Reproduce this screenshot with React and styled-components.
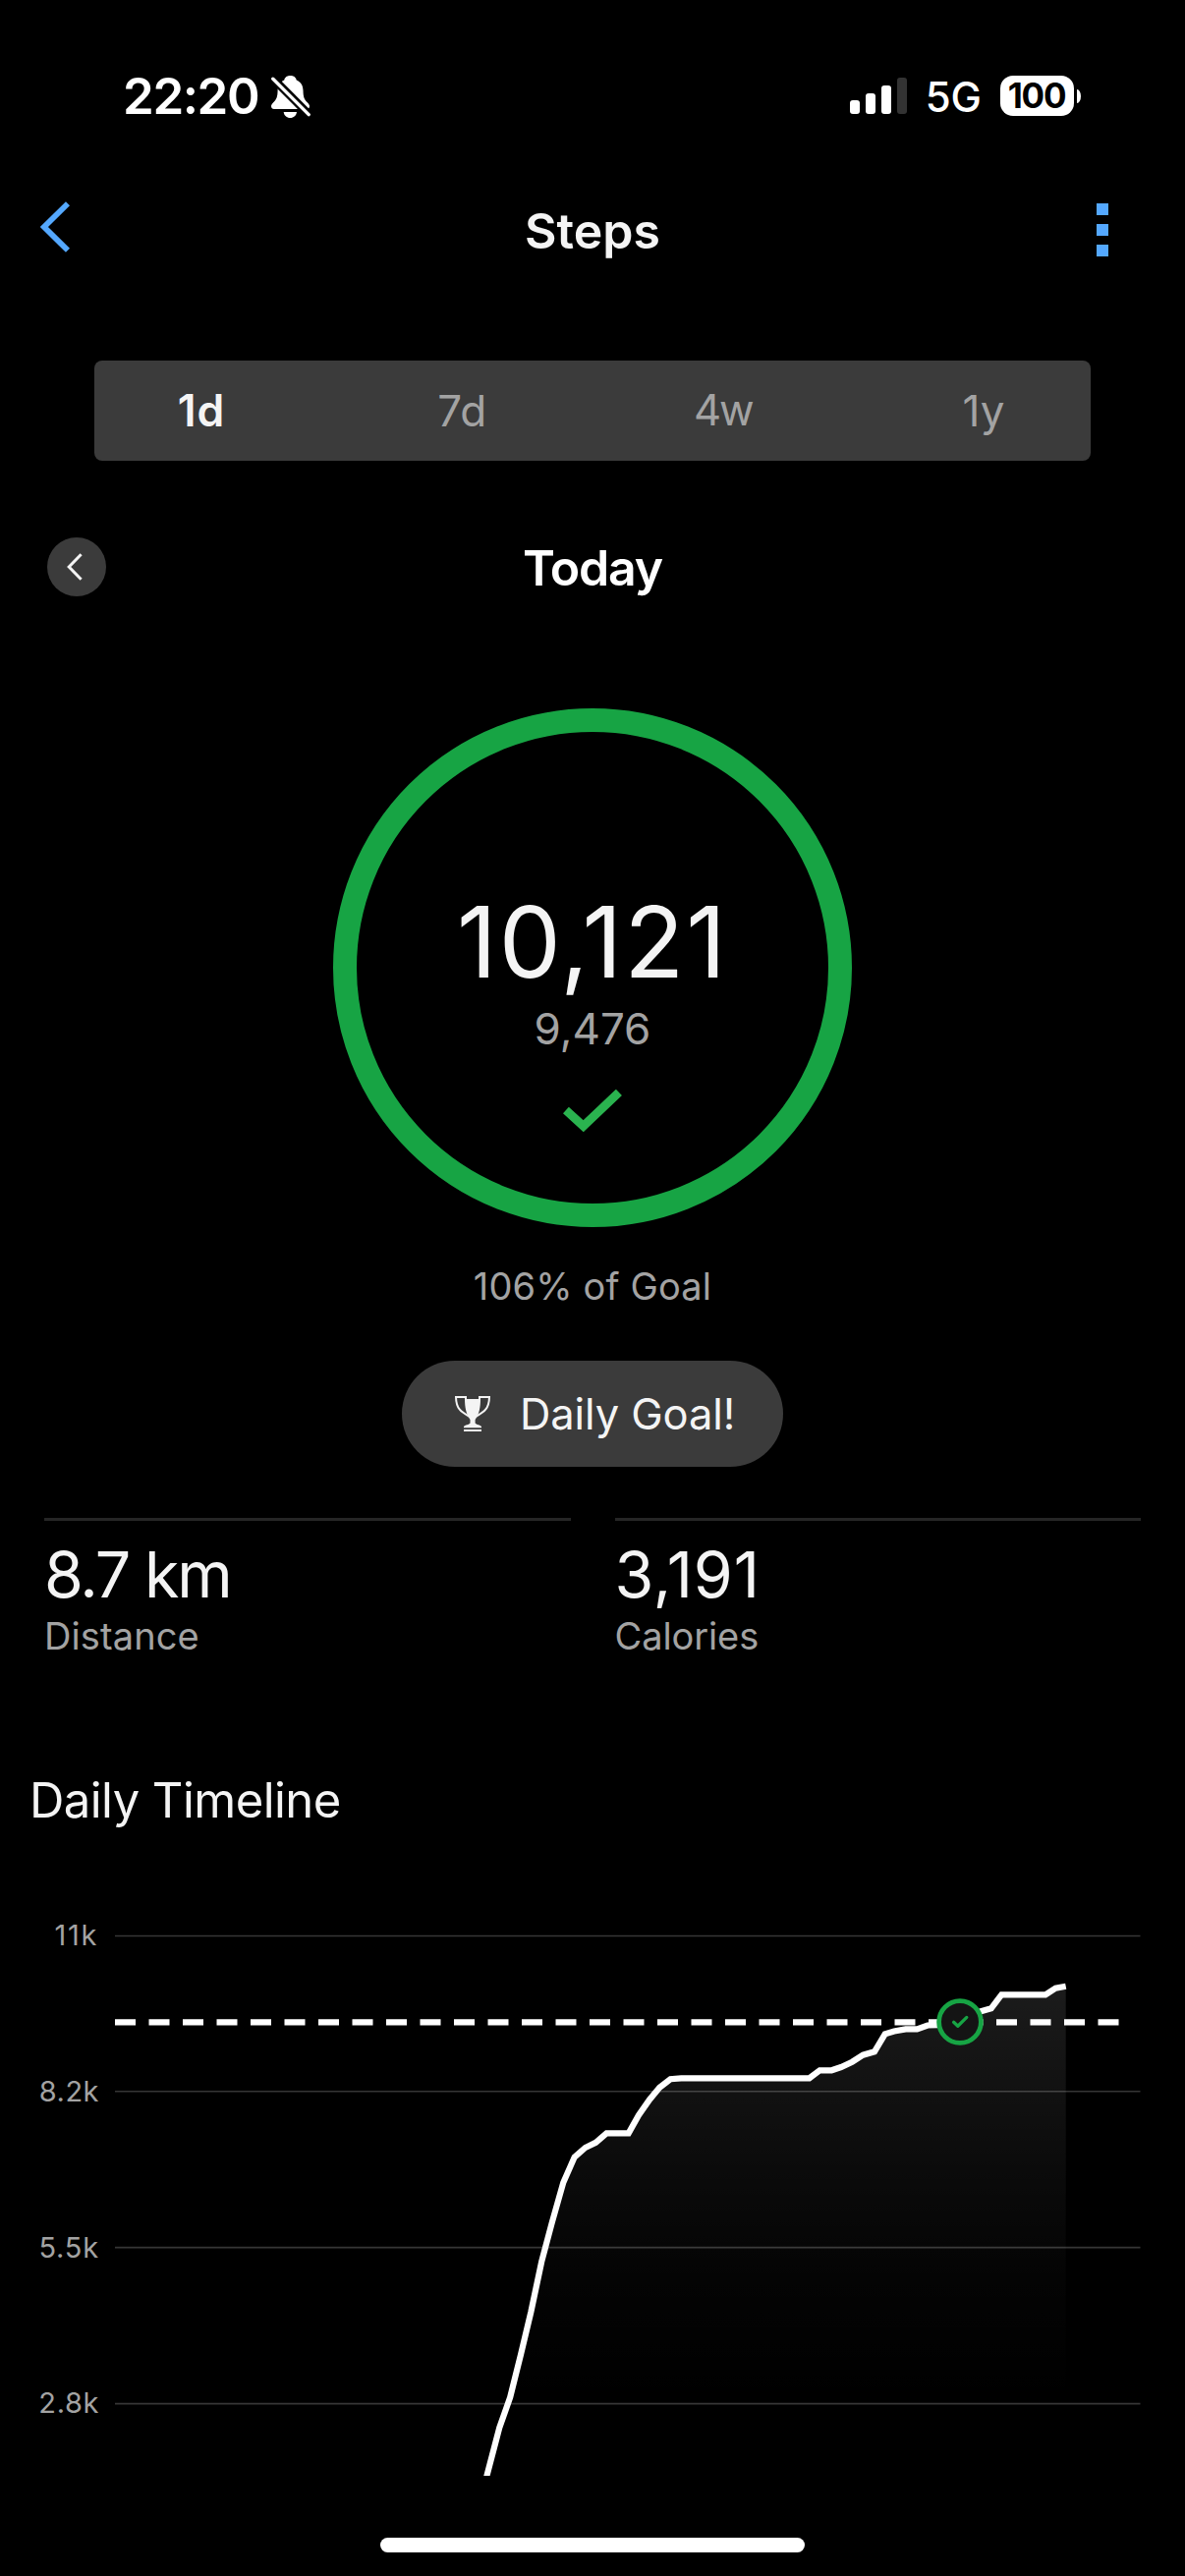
import React from "react";
import styled, { createGlobalStyle } from "styled-components";

const GlobalStyle = createGlobalStyle`
  * { box-sizing: border-box; }
  body {
    margin: 0;
    background: #000;
    color: #f4f4f4;
    font-family: Inter, "Liberation Sans", sans-serif;
  }
  svg { display: block; flex: none; }
`;

const Screen = styled.main`
  width: 1206px;
  height: 2622px;
  overflow: hidden;
  display: flex;
  flex-direction: column;
  background: #000;
`;

const Text = styled.span`
  font-size: ${(p) => p.$size}px;
  font-weight: ${(p) => p.$weight || 400};
  letter-spacing: ${(p) => p.$spacing || 0}px;
  line-height: ${(p) => p.$line || p.$size}px;
  color: ${(p) => p.$color || "#f4f4f4"};
  white-space: nowrap;
`;

/* Status bar */
const StatusBar = styled.header`
  height: 195px;
  padding: 0 106px 0 125px;
  display: flex;
  justify-content: space-between;
  align-items: center;
`;

const StatusGroup = styled.div`
  display: flex;
  align-items: center;
`;

const BellWrap = styled.div`
  margin: 2px 0 0 13px;
`;

const Signal = styled.div`
  display: flex;
  align-items: flex-end;
  gap: 6px;
  margin-right: 19px;
`;

const SignalBar = styled.i`
  width: 10px;
  height: ${(p) => p.$height}px;
  border-radius: 3px;
  background: ${(p) => (p.$off ? "#333" : "#fff")};
`;

const Network = styled(Text)`
  margin: 3px 19px 0 0;
`;

const Battery = styled.div`
  width: 75px;
  height: 41px;
  padding-right: 1px;
  border-radius: 13px;
  background: #fff;
  display: flex;
  justify-content: center;
  align-items: center;
`;

const BatteryCap = styled.i`
  width: 4px;
  height: 14px;
  margin-left: 3px;
  border-radius: 0 4px 4px 0 / 0 7px 7px 0;
  background: #fff;
`;

/* Navigation */
const NavBar = styled.nav`
  height: 78px;
  padding: 0 78px 0 41px;
  display: grid;
  grid-template-columns: 49px 1fr 12px;
  align-items: center;
`;

const BackButton = styled.div`
  margin-bottom: 6px;
`;

const NavTitle = styled.h1`
  margin: 2px 0 0;
  display: flex;
  justify-content: center;
`;

const Dots = styled.div`
  display: flex;
  flex-direction: column;
  gap: 9px;
`;

const Dot = styled.i`
  width: 12px;
  height: 12px;
  background: #54a8ff;
`;

/* Range switch */
const Segments = styled.div`
  height: 102px;
  margin: 94px 96px 0;
  padding: 0 24px;
  display: flex;
  justify-content: space-between;
  align-items: center;
  border-radius: 8px;
  background: #3b3b3b;
`;

const Segment = styled.div`
  width: 170px;
  display: flex;
  justify-content: center;
`;

/* Date row */
const DateRow = styled.div`
  height: 60px;
  margin-top: 78px;
  padding: 0 48px;
  display: grid;
  grid-template-columns: 60px 1fr 60px;
  align-items: center;
  justify-items: center;
`;

const DateTitle = styled(Text)`
  padding-top: 2px;
`;

const PrevButton = styled.div`
  width: 60px;
  height: 60px;
  padding-right: 4px;
  border-radius: 50%;
  background: #3b3b3b;
  display: flex;
  justify-content: center;
  align-items: center;
`;

/* Goal ring */
const Summary = styled.section`
  margin-top: 114px;
  display: flex;
  flex-direction: column;
  align-items: center;
`;

const Ring = styled.div`
  width: 528px;
  height: 528px;
  padding-top: 154px;
  border: 24px solid #17a444;
  border-radius: 50%;
  display: flex;
  flex-direction: column;
  align-items: center;
`;

const RingCheck = styled.div`
  margin-top: 33px;
`;

const GoalText = styled(Text)`
  margin-top: 30px;
`;

const Badge = styled.div`
  width: 388px;
  height: 108px;
  margin-top: 46px;
  padding-left: 54px;
  display: flex;
  align-items: center;
  gap: 30px;
  border-radius: 54px;
  background: #3b3b3b;
`;

const BadgeText = styled(Text)`
  padding-top: 1px;
`;

/* Stats */
const Stats = styled.section`
  margin-top: 52px;
  padding: 0 45px;
  display: grid;
  grid-template-columns: 1fr 1fr;
  gap: 45px;
`;

const Stat = styled.div`
  padding-top: 22px;
  border-top: 3px solid #262626;
  display: flex;
  flex-direction: column;
  gap: 4px;
`;

/* Timeline */
const SectionTitle = styled.h2`
  margin: 111px 0 0 30px;
  display: flex;
`;

const Timeline = styled.section`
  height: 629px;
  margin-top: 26px;
  display: flex;
  gap: 16px;
  overflow: hidden;
`;

const AxisLabels = styled.div`
  width: 101px;
  flex: none;
  display: flex;
  flex-direction: column;
  align-items: flex-end;
`;

const AxisLabel = styled(Text)`
  padding-right: ${(p) => p.$inset || 0}px;
`;

const HomeIndicator = styled.div`
  width: 432px;
  height: 15px;
  margin: 63px auto 0;
  border-radius: 8px;
  background: #fff;
`;

const grey = "#a3a3a3";

const ranges = [
  { label: "1d", active: true, size: 44.5, spacing: 1 },
  { label: "7d", size: 44, spacing: 0.3 },
  { label: "4w", size: 43.5, spacing: -2.2 },
  { label: "1y", size: 44, spacing: 0 },
];

const stats = [
  { value: "8.7 km", label: "Distance", spacing: -2.17, labelSpacing: 0.1 },
  { value: "3,191", label: "Calories", spacing: 0.9, labelSpacing: -0.1 },
];

const axis = [
  { label: "11k", spacing: 1.7, inset: 1, line: 157 },
  { label: "8.2k", spacing: 0.5, line: 161 },
  { label: "5.5k", spacing: 0.8, line: 157 },
  { label: "2.8k", spacing: 0.6, line: 159 },
];

const steps = [
  [375.5, 641], [378.7, 628], [391.3, 580], [402.2, 549], [413, 505.8], [423.3, 462.5], [434.2, 411],
  [444.7, 371.5], [456.3, 330.5], [467.7, 304.6], [478.7, 295], [489.3, 289.8], [500.3, 280.3],
  [522.7, 280.3], [533, 262], [544, 246.2], [554.3, 233.8], [565.3, 225.2], [576.3, 224.3],
  [706.7, 224.3], [717.3, 216.3], [729.3, 216.3], [739, 213], [750.3, 207.7], [761.3, 200.7],
  [773, 197.3], [783.7, 179.3], [793, 176.5], [804.7, 174.4], [816.3, 174.4], [827, 170.5],
  [838, 170.2], [849, 168], [881.3, 156.2], [891.7, 153.3], [902.3, 139.3], [947, 139.3],
  [957.3, 132.7], [967.7, 130.7],
];
const line = steps.map((p) => p.join(",")).join(" ");
const area = `${line} 967.7,641`;

const BellOff = () => (
  <svg width="40" height="43" viewBox="0 0 40 43">
    <path
      fill="#fff"
      d="M19.5 0C15.4 0 13.6 2.4 13.3 4.4C9 6.2 6.7 9.6 6.6 15C6.4 22 5.6 24 2 27.4C0.6 28.9 0 30 0 31C0 33 1.2 34 3 34H36C38 34 39 33 39 31C39 30 38.4 28.9 37 27.4C33.4 24 32.7 22 32.5 15C32.4 9.6 30 6.2 25.7 4.4C25.4 2.4 23.6 0 19.5 0Z"
    />
    <path d="M-2 -0.9L42 43.1" stroke="#000" strokeWidth="8.4" />
    <path fill="#fff" d="M12.7 37H26C25.6 40.6 22.9 43 19.3 43C15.8 43 13.1 40.6 12.7 37Z" />
    <path d="M1.8 3.2L38.2 39.6" stroke="#fff" strokeWidth="3.4" strokeLinecap="round" />
  </svg>
);

const Trophy = () => (
  <svg width="36" height="36" viewBox="0 0 36 36">
    <path
      d="M12 1H1C1.3 12.5 5.5 16 15.5 21.3M24 1H35C34.7 12.5 30.5 16 20.5 21.3M11 0V4M25 0V4"
      fill="none"
      stroke="#f4f4f4"
      strokeWidth="2"
    />
    <path
      fill="#f4f4f4"
      d="M10 3H26C26 11 24.8 18.5 20.6 24V27.4C21.6 29.2 26 29 27 31V32.3H9V31C10 29 14.6 29.2 15.5 27.4V24C11.3 18.5 10 11 10 3Z"
    />
    <path fill="#f4f4f4" d="M9 34H27V36H9Z" />
  </svg>
);

export default function App() {
  return (
    <Screen>
      <GlobalStyle />
      <StatusBar>
        <StatusGroup>
          <Text $size={51} $weight={600} $spacing={-1.4} $color="#fff">22:20</Text>
          <BellWrap><BellOff /></BellWrap>
        </StatusGroup>
        <StatusGroup>
          <Signal>
            <SignalBar $height={14} />
            <SignalBar $height={21} />
            <SignalBar $height={29} />
            <SignalBar $height={37} $off />
          </Signal>
          <Network $size={42} $weight={500} $color="#fff">5G</Network>
          <Battery>
            <Text $size={35} $weight={700} $spacing={-1.2} $color="#000">100</Text>
          </Battery>
          <BatteryCap />
        </StatusGroup>
      </StatusBar>

      <NavBar>
        <BackButton>
          <svg width="30" height="52" viewBox="0 0 30 52">
            <path d="M28 2.2L3.9 26L28 49.8" fill="none" stroke="#54a8ff" strokeWidth="5.8" />
          </svg>
        </BackButton>
        <NavTitle><Text $size={50} $weight={600}>Steps</Text></NavTitle>
        <Dots><Dot /><Dot /><Dot /></Dots>
      </NavBar>

      <Segments>
        {ranges.map((r) => (
          <Segment key={r.label}>
            <Text
              $size={r.size}
              $weight={r.active ? 600 : 400}
              $spacing={r.spacing}
              $color={r.active ? "#f4f4f4" : grey}
            >
              {r.label}
            </Text>
          </Segment>
        ))}
      </Segments>

      <DateRow>
        <PrevButton>
          <svg width="16" height="28" viewBox="0 0 16 28">
            <path d="M14.6 1.2L2.2 14L14.6 26.8" fill="none" stroke="#f4f4f4" strokeWidth="3" />
          </svg>
        </PrevButton>
        <DateTitle $size={50} $weight={600} $spacing={-1.2} $line={58} $color="#fff">Today</DateTitle>
      </DateRow>

      <Summary>
        <Ring>
          <Text $size={100} $spacing={2.07} $line={120}>10,121</Text>
          <Text $size={44} $line={57} $color={grey}>9,476</Text>
          <RingCheck>
            <svg width="60" height="44" viewBox="0 0 60 44">
              <path d="M2.9 21L20.7 37.3L56.9 2.9" fill="none" stroke="#2ab34f" strokeWidth="8.8" />
            </svg>
          </RingCheck>
        </Ring>
        <GoalText $size={38} $spacing={0.15} $line={60} $color={grey}>106% of Goal</GoalText>
        <Badge>
          <Trophy />
          <BadgeText $size={43.5} $spacing={-0.1}>Daily Goal!</BadgeText>
        </Badge>
      </Summary>

      <Stats>
        {stats.map((s) => (
          <Stat key={s.label}>
            <Text $size={64.5} $spacing={s.spacing} $line={66}>{s.value}</Text>
            <Text $size={38} $spacing={s.labelSpacing} $line={50} $color={grey}>{s.label}</Text>
          </Stat>
        ))}
      </Stats>

      <SectionTitle>
        <Text $size={49} $spacing={-0.55} $line={64}>Daily Timeline</Text>
      </SectionTitle>

      <Timeline>
        <AxisLabels>
          {axis.map((a) => (
            <AxisLabel key={a.label} $size={29} $spacing={a.spacing} $line={a.line} $inset={a.inset} $color={grey}>
              {a.label}
            </AxisLabel>
          ))}
        </AxisLabels>
        <svg width="1044" height="629" viewBox="0 0 1044 629">
          <defs>
            <linearGradient id="fade" gradientUnits="userSpaceOnUse" x1="0" y1="130" x2="0" y2="629">
              <stop offset="0" stopColor="#fff" stopOpacity="0.11" />
              <stop offset="0.19" stopColor="#fff" stopOpacity="0.073" />
              <stop offset="0.38" stopColor="#fff" stopOpacity="0.043" />
              <stop offset="0.6" stopColor="#fff" stopOpacity="0.016" />
              <stop offset="0.85" stopColor="#fff" stopOpacity="0" />
            </linearGradient>
          </defs>
          {[79.5, 237.7, 396.6, 555.6].map((y) => (
            <path key={y} d={`M0 ${y}H1043.5`} stroke="#fff" strokeOpacity="0.21" strokeWidth="1.6" />
          ))}
          <polygon points={area} fill="url(#fade)" />
          <path d="M0 167.4H1021.5" stroke="#fff" strokeWidth="6.2" strokeDasharray="21 13.5" />
          <polyline points={line} fill="none" stroke="#fff" strokeWidth="6.2" />
          <circle cx="860" cy="167" r="21.4" fill="#141414" stroke="#17a444" strokeWidth="4.8" />
          <path
            d="M853.6 167.3L857.8 171.2L866.8 162.4"
            fill="none"
            stroke="#17a444"
            strokeWidth="3.3"
            strokeLinecap="round"
            strokeLinejoin="round"
          />
        </svg>
      </Timeline>
      <HomeIndicator />
    </Screen>
  );
}
